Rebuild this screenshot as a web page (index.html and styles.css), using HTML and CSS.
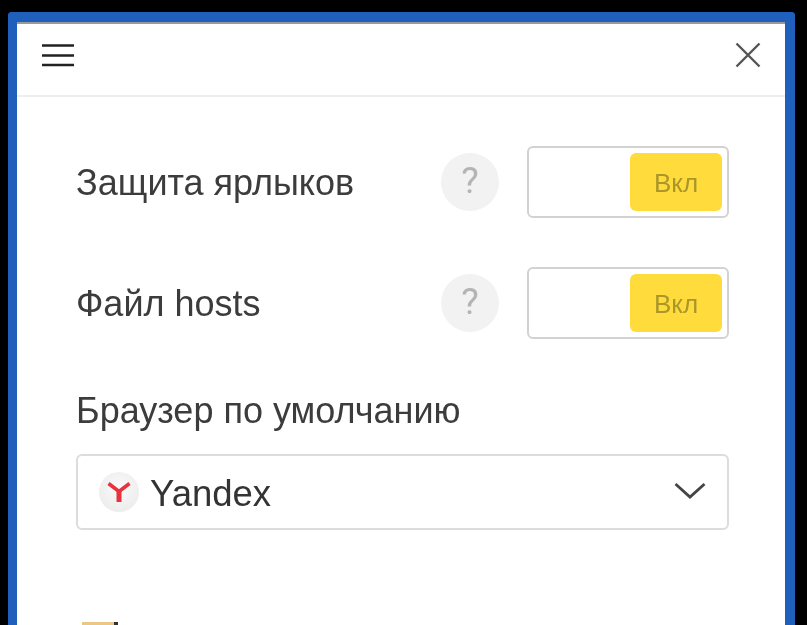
FILE: index.html
```html
<!DOCTYPE html>
<html lang="ru">
<head>
<meta charset="utf-8">
<title>Настройки</title>
<link rel="stylesheet" href="styles.css">
</head>
<body>
<div class="panel">
  <header class="topbar">
    <svg class="menu-icon" width="34" height="24" viewBox="0 0 34 24"><path d="M1 2.500h32M1 12.500h32M1 22h32" fill="none" stroke="#222" stroke-width="2.400"/></svg>
    <svg class="close-icon" width="28" height="28" viewBox="0 0 28 28"><path d="M2.500 2.500l23 23M25.500 2.500l-23 23" fill="none" stroke="#555" stroke-width="2.400"/></svg>
  </header>
  <main class="content">
    <div class="row">
      <span class="label">Защита ярлыков</span>
      <span class="help">?</span>
      <div class="toggle"><span class="knob">Вкл</span></div>
    </div>
    <div class="row">
      <span class="label">Файл hosts</span>
      <span class="help">?</span>
      <div class="toggle"><span class="knob">Вкл</span></div>
    </div>
    <div class="field-label">Браузер по умолчанию</div>
    <div class="select">
      <span class="browser-icon">
        <svg width="26" height="26" viewBox="0 0 26 26"><path d="M2.500 4.500L13 12.500l10.500-8" fill="none" stroke="#e8333f" stroke-width="3.600"/><path d="M13 12v11" fill="none" stroke="#e8333f" stroke-width="5"/></svg>
      </span>
      <span class="select-text">Yandex</span>
      <svg class="chevron" width="32" height="18" viewBox="0 0 32 18"><path d="M1.500 2L16 15 30.500 2" fill="none" stroke="#444" stroke-width="2.800"/></svg>
    </div>
    <div class="peek"><span class="peek-icon"></span></div>
  </main>
</div>
</body>
</html>
```

FILE: styles.css
```css
html, body {
  margin: 0;
  height: 100%;
  overflow: hidden;
  background: #000;
}
body {
  box-sizing: border-box;
  padding: 12px 12px 0 8px;
  font-family: "Liberation Sans", Arial, sans-serif;
}
.panel {
  box-sizing: border-box;
  height: 613px;
  background: #fff;
  border: solid #1f60bd;
  border-width: 10px 10px 0 9px;
  border-radius: 4px 4px 0 0;
  overflow: hidden;
  filter: blur(0.6px);
}
.topbar {
  box-sizing: border-box;
  height: 75px;
  display: flex;
  align-items: center;
  justify-content: space-between;
  padding: 0 23px 0 24px;
  border-top: 2px solid #9a9a9a;
  border-bottom: 2px solid #eeeeee;
}
.menu-icon { display: block; margin-top: -10px; }
.close-icon { display: block; margin-top: -9px; }
.content {
  padding: 49px 56px 0 59px;
}
.row {
  display: flex;
  align-items: center;
  height: 72px;
  margin-bottom: 49px;
}
.label {
  flex: 1;
  padding-top: 2px;
  font-size: 36px;
  color: #3c3c3c;
}
.help {
  box-sizing: border-box;
  width: 58px;
  height: 58px;
  padding-bottom: 3px;
  border-radius: 50%;
  background: #f2f2f2;
  color: #b4b4b4;
  font-family: Roboto, sans-serif;
  font-size: 37px;
  display: flex;
  align-items: center;
  justify-content: center;
  margin-right: 28px;
}
.toggle {
  box-sizing: border-box;
  width: 202px;
  height: 72px;
  border: 2px solid #d2d2d2;
  border-radius: 6px;
  background: #fff;
  padding: 5px;
  display: flex;
  justify-content: flex-end;
}
.knob {
  box-sizing: border-box;
  width: 92px;
  height: 58px;
  padding-top: 2px;
  border-radius: 6px;
  background: #ffdb3c;
  color: #ab962a;
  font-size: 26px;
  display: flex;
  align-items: center;
  justify-content: center;
}
.field-label {
  font-size: 36px;
  color: #3c3c3c;
  line-height: 38px;
  margin-top: 53px;
  margin-bottom: 24px;
}
.select {
  box-sizing: border-box;
  height: 76px;
  border: 2px solid #dcdcdc;
  border-radius: 6px;
  display: flex;
  align-items: center;
  padding: 0 21px;
}
.browser-icon {
  width: 40px;
  height: 40px;
  border-radius: 50%;
  background: radial-gradient(circle at 50% 40%, #fafafa, #e8e8e8);
  display: flex;
  align-items: center;
  justify-content: center;
}
.select-text {
  flex: 1;
  margin-left: 11px;
  margin-top: 4px;
  font-size: 36.500px;
  color: #333;
}
.chevron { display: block; margin-top: -3px; }
.peek {
  padding: 92px 0 0 6px;
}
.peek-icon {
  position: relative;
  display: block;
  width: 36px;
  height: 12px;
  background: #eac884;
}
.peek-icon::after {
  content: "";
  position: absolute;
  top: 0;
  right: 0;
  width: 4px;
  height: 3px;
  background: #333;
}
```
